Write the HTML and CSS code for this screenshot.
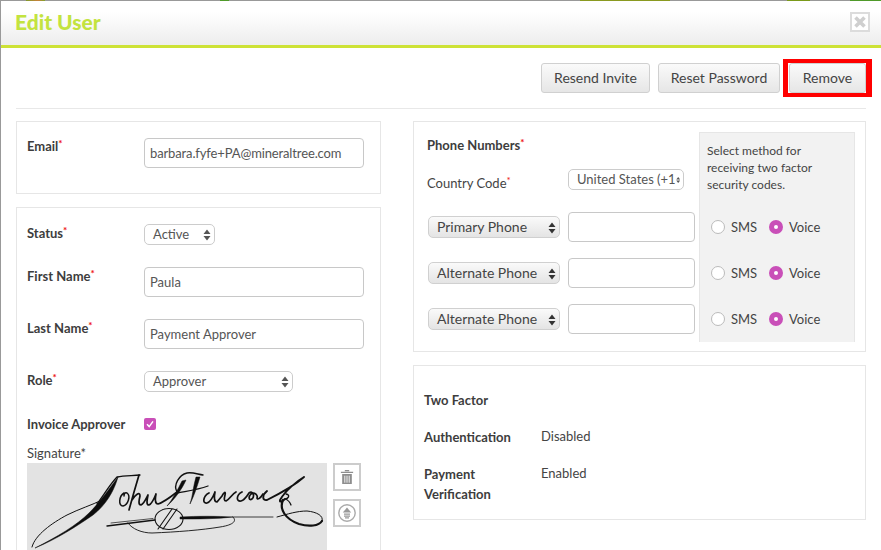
FILE: index.html
```html
<!DOCTYPE html>
<html lang="en">
<head>
<meta charset="utf-8">
<title>Edit User</title>
<link rel="stylesheet" href="styles.css">
</head>
<body>
<div class="modal">
  <header class="head">
    <h1>Edit User</h1>
    <svg class="close" width="20" height="20" viewBox="0 0 20 20"><rect x="1" y="1" width="18" height="18" fill="#fff" stroke="#dcdcdc" stroke-width="2"/><path d="M5.5 5.5l9 9M14.5 5.5l-9 9" stroke="#cfcfcf" stroke-width="3.6"/></svg>
  </header>
  <div class="toolbar">
    <button class="btn b-resend">Resend Invite</button>
    <button class="btn b-reset">Reset Password</button>
    <button class="btn b-remove">Remove</button>
  </div>
  <div class="cols">
    <div class="col">
      <section class="panel email">
        <label class="lab b">Email<i>*</i></label>
        <input class="inp inp-email" value="barbara.fyfe+PA@mineraltree.com">
      </section>
      <section class="panel form">
        <div class="row r-status">
          <label class="lab b">Status<i>*</i></label>
          <div class="sel s-status"><span>Active</span><svg class="ar" width="8" height="12" viewBox="0 0 8 12"><path d="M4 0.5L7.5 5H.5zM4 11.5L.5 7h7z" fill="#555"/></svg></div>
        </div>
        <div class="row r-first">
          <label class="lab b">First Name<i>*</i></label>
          <input class="inp" value="Paula">
        </div>
        <div class="row r-last">
          <label class="lab b">Last Name<i>*</i></label>
          <input class="inp" value="Payment Approver">
        </div>
        <div class="row r-role">
          <label class="lab b">Role<i>*</i></label>
          <div class="sel s-role"><span>Approver</span><svg class="ar" width="8" height="12" viewBox="0 0 8 12"><path d="M4 0.5L7.5 5H.5zM4 11.5L.5 7h7z" fill="#555"/></svg></div>
        </div>
        <div class="row r-inv">
          <label class="lab b">Invoice Approver</label>
          <span class="check"><svg width="12" height="12" viewBox="0 0 12 12"><path d="M3 6.2l2.2 2.4L9 3.4" fill="none" stroke="#fff" stroke-width="1.5"/></svg></span>
        </div>
        <div class="sig-lab">Signature*</div>
        <div class="sig-row">
          <svg class="sig" width="300" height="87" viewBox="0 0 300 87">
            <rect width="300" height="87" fill="#e3e3e3"/>
            <g fill="#0c0c0c" stroke="#0c0c0c" stroke-width=".5" stroke-linejoin="round">
              <path d="M91 14C87 28 79 42 66 52C50 63 30 76 8 85C30 74 50 62 62 50C74 38 82 26 91 14Z"/>
              <path d="M173 14C170 24 167 33 163 41C166 32 166 24 169 14ZM159 17C155 26 148 36 140 43C146 36 151 26 155 18Z"/>
              <path d="M153 54C170 53 190 53 206 54C190 56 170 56 153 56Z"/>
            </g>
            <g fill="none" stroke="#111" stroke-linecap="round" stroke-linejoin="round">
              <path d="M5 84C8 72 25 60 40 52C52 46 65 42 75 37" stroke-width="1"/>
              <path d="M70 41C78 30 84 20 90 14C98 12 106 13 113 12" stroke-width="1.3"/>
              <path d="M97 30C92 33 91 43 96 43C101 42 104 33 100 30C98 29 97 31 97 33" stroke-width="1.5"/>
              <path d="M112 12C109 22 105 36 102 47M105 37C108 32 113 28 113 33C112 37 111 42 114 42C117 41 119 36 121 32C120 37 119 42 122 42C125 41 127 36 129 31C128 36 128 41 131 41C135 40 141 36 150 29" stroke-width="1.7"/>
              <path d="M150 29C146 22 152 12 160 10C165 9 170 11 176 12" stroke-width="1.4"/>
              <path d="M150 30C160 28 170 27 181 23" stroke-width="1.3"/>
              <path d="M182 30C176 33 175 41 180 40C184 39 186 34 188 29C187 34 187 39 190 39L195 33C197 29 199 28 198 32C197 36 197 38 199 38C203 36 205 31 209 29" stroke-width="1.7"/>
              <path d="M215 29C209 32 209 39 214 38C218 37 220 33 222 30C226 27 228 33 225 36C222 38 221 34 224 31C228 28 231 33 230 35C230 37 233 36 236 31" stroke-width="1.7"/>
              <path d="M240 28C235 32 235 38 240 37C248 33 268 22 277 14C270 18 258 28 253 37C252 40 256 38 258 36" stroke-width="1.9"/>
              <path d="M259 31C264 32 261 36 258 36C261 37 263 39 264 42" stroke-width="1.3"/>
              <path d="M256 37C252 46 258 56 272 61C282 64 292 63 295 58" stroke-width="2.2"/>
              <path d="M295 58C297 53 290 49 280 48C270 48 261 51 250 54" stroke-width="1"/>
              <path d="M206 54C212 60 200 63 193 64C175 67 150 69 125 70C115 70 105 66 101 60" stroke-width=".9"/>
              <path d="M206 54H246" stroke-width=".8"/>
              <ellipse cx="142" cy="56" rx="14" ry="10.5" stroke-width="1.1"/>
              <path d="M150 46L136 66M145 46L131 66" stroke-width="1.1"/>
              <path d="M80 63L128 57" stroke-width="1.4"/>
              <path d="M84 60L126 55.5" stroke-width=".7"/>
            </g>
          </svg>
          <div class="sig-tools">
            <span class="tool"><svg width="14" height="16" viewBox="0 0 16 18"><path d="M5.5 2.5V1h5v1.5M1 3h14v1.5H1zM2.5 5.5h11V17h-11z" fill="#8e8e8e"/><path d="M5.5 7.5v8M8 7.5v8M10.5 7.5v8" stroke="#fff" stroke-width="1"/></svg></span>
            <span class="tool"><svg width="18" height="18" viewBox="0 0 18 18"><circle cx="9" cy="9" r="8.2" fill="none" stroke="#aaa" stroke-width="1.4"/><path d="M9 3.6L13.2 8.4H4.8z" fill="#999"/><path d="M6 9.4h6v1.3H6zM6 11.4h6v1.3H6zM7 13.3h4v1.1H7z" fill="#999"/></svg></span>
          </div>
        </div>
      </section>
    </div>
    <div class="col">
      <section class="panel phones">
        <div class="ph-main">
          <div class="lab b ph-title">Phone Numbers<i>*</i></div>
          <div class="cc">
            <label class="lab">Country Code<i>*</i></label>
            <div class="sel s-cc"><span>United States (+1</span><svg class="ar" width="8" height="12" viewBox="0 0 8 12"><path d="M4 0.5L7.5 5H.5zM4 11.5L.5 7h7z" fill="#555"/></svg></div>
          </div>
          <div class="ph-row">
            <div class="sel grey"><span>Primary Phone</span><svg class="ar" width="8" height="12" viewBox="0 0 8 12"><path d="M4 0.5L7.5 5H.5zM4 11.5L.5 7h7z" fill="#333"/></svg></div>
            <input class="inp ph-inp">
          </div>
          <div class="ph-row">
            <div class="sel grey"><span>Alternate Phone</span><svg class="ar" width="8" height="12" viewBox="0 0 8 12"><path d="M4 0.5L7.5 5H.5zM4 11.5L.5 7h7z" fill="#333"/></svg></div>
            <input class="inp ph-inp">
          </div>
          <div class="ph-row">
            <div class="sel grey"><span>Alternate Phone</span><svg class="ar" width="8" height="12" viewBox="0 0 8 12"><path d="M4 0.5L7.5 5H.5zM4 11.5L.5 7h7z" fill="#333"/></svg></div>
            <input class="inp ph-inp">
          </div>
        </div>
        <aside class="method">
          <p>Select method for receiving two factor security codes.</p>
          <div class="radios"><span class="rad"></span><span>SMS</span><span class="rad on"></span><span>Voice</span></div>
          <div class="radios"><span class="rad"></span><span>SMS</span><span class="rad on"></span><span>Voice</span></div>
          <div class="radios"><span class="rad"></span><span>SMS</span><span class="rad on"></span><span>Voice</span></div>
        </aside>
      </section>
      <section class="panel factor">
        <div class="lab b f-title">Two Factor</div>
        <div class="f-row"><span class="lab b">Authentication</span><span class="lab">Disabled</span></div>
        <div class="f-row"><span class="lab b">Payment<br>Verification</span><span class="lab">Enabled</span></div>
      </section>
    </div>
  </div>
</div>
</body>
</html>
```
FILE: styles.css
```css
* { box-sizing: border-box; }
html, body { margin: 0; height: 550px; overflow: hidden; }
body {
  background-color: #999;
  background-image: linear-gradient(90deg, #999 26px, #7f9a2a 26px, #c9803a 38px, #7fa52a 45px, #999 45px, #999 220px, #4f9a2a 220px, #4f9a2a 229px, #999 229px, #999 580px, #8a9a20 580px, #8a9a20 670px, #999 670px, #999 787px, #7a9a1a 787px, #7a9a1a 810px, #999 810px, #999 850px, #4f9a2a 850px);
  background-size: 100% 1px;
  background-repeat: no-repeat;
  font-family: Lato, "Open Sans", sans-serif;
  font-size: 13px;
  color: #444;
  padding: 1px 0 0 1px;
}
.modal { background: #fff; height: 549px; overflow: hidden; }
.head { height: 47px; border-bottom: 3px solid #cde236; background: linear-gradient(#fff 25%, #ededed); display: flex; justify-content: space-between; align-items: flex-start; padding: 11px 11px 0 14px; }
.head h1 { margin: 0; font-size: 21px; line-height: 20px; font-weight: 900; color: #c3e33f; }
.toolbar { margin: 15px 15px 0; padding-bottom: 15px; border-bottom: 1px solid #e8e8e8; display: flex; justify-content: flex-end; box-sizing: content-box; height: 30px; }
.btn { position: relative; height: 30px; padding: 0 0 2px; border: 1px solid #d0d0d0; border-radius: 3px; background: linear-gradient(#fafafa, #e6e6e6); font: 14px Lato, sans-serif; color: #444; }
.b-resend { width: 109px; margin-right: 8px; }
.b-reset { width: 122px; margin-right: 9px; }
.b-remove { width: 77px; }
.b-remove::after { content: ""; position: absolute; inset: -5px -7px -5px -7px; border: solid #f00; border-width: 4px 6px 4px 5px; }
.cols { display: grid; grid-template-columns: 365px 453px; column-gap: 32px; padding: 12px 15px 0; align-items: start; }
.col { display: flex; flex-direction: column; gap: 13px; }
.panel { border: 1px solid #e6e6e6; }
.lab { line-height: 16px; color: #444; }
.lab.b { font-weight: 700; color: #3d3d3d; }
.lab i { color: #e11; font-style: normal; font-size: 10px; vertical-align: 4px; line-height: 0; }
.inp { display: block; height: 30px; border: 1px solid #c8c8c8; border-radius: 4px; padding: 0 5px; font: 13px Lato, sans-serif; color: #555; width: 220px; background: #fff; outline: 0; }
.inp-email { letter-spacing: -.13px; }
.email { height: 73px; padding: 16px 16px 0 10px; display: flex; justify-content: space-between; }
.form { height: 400px; padding: 0 16px 0 10px; }
.row { display: flex; justify-content: space-between; }
.r-status { margin-top: 17px; height: 33px; justify-content: flex-start; }
.r-status .lab, .r-role .lab, .r-inv .lab { width: 117px; }
.r-status .sel { margin-top: -1px; }
.r-first { margin-top: 9px; height: 52px; }
.r-last { height: 52px; }
.r-first .lab, .r-last .lab, .r-role .lab { margin-top: 1px; }
.r-role { height: 42px; justify-content: flex-start; }
.r-inv { height: 32px; justify-content: flex-start; }
.r-inv .lab { margin-top: 3px; }
.r-inv .check { margin-top: 5px; }
.sel { display: flex; align-items: center; justify-content: space-between; height: 21px; border: 1px solid #ccc; border-radius: 5px; background: #fff; padding: 0 3px 2px 8px; color: #555; }
.sel .ar { margin-top: 2px; }
.s-status { width: 71px; }
.s-role { width: 149px; }
.s-cc { width: 116px; white-space: nowrap; }
.check { width: 12px; height: 12px; border-radius: 2px; background: #c94fb8; display: flex; }
.sig-lab { line-height: 16px; }
.sig-row { display: flex; gap: 6px; margin-top: 2px; }
.sig { display: block; }
.sig-tools { display: flex; flex-direction: column; gap: 8px; }
.tool { width: 28px; height: 28px; border: 2px solid #ccc; display: flex; align-items: center; justify-content: center; }
.phones { height: 231px; display: flex; justify-content: space-between; padding: 10px 0 0 13px; }
.ph-main { width: 268px; }
.ph-title { margin-top: 5px; }
.cc { display: flex; margin-top: 16px; height: 35px; }
.cc .lab { margin-top: 6px; width: 141px; }
.ph-row { display: flex; justify-content: space-between; align-items: center; height: 46px; }
.sel.grey { width: 132px; height: 22px; margin-left: 1px; border-color: #d0d0d0; background: linear-gradient(#fafafa, #e4e4e4); color: #444; font-size: 14px; padding-bottom: 1px; }
.ph-inp { width: 127px; }
.method { width: 156px; height: 210px; margin-right: 10px; background: #f2f2f2; border: 1px solid #e6e6e6; border-bottom: 0; padding: 9px 0 0 7px; font-size: 12px; }
.method p { margin: 0 0 11px; line-height: 17px; width: 120px; }
.radios { display: flex; align-items: center; height: 46px; font-size: 13px; color: #444; padding-left: 4px; }
.rad { width: 14px; height: 14px; border-radius: 50%; border: 1px solid #bbb; background: #fff; margin-right: 6px; }
.radios span:nth-child(2) { width: 38px; }
.rad.on { border: 5px solid #c94fb8; }
.factor { height: 155px; padding: 0 10px; }
.f-title { margin-top: 26px; }
.f-row { display: grid; grid-template-columns: 117px 1fr; margin-top: 20px; }
.f-row + .f-row { margin-top: 18px; }
.f-row .b { line-height: 20px; margin-top: -1px; }
```
